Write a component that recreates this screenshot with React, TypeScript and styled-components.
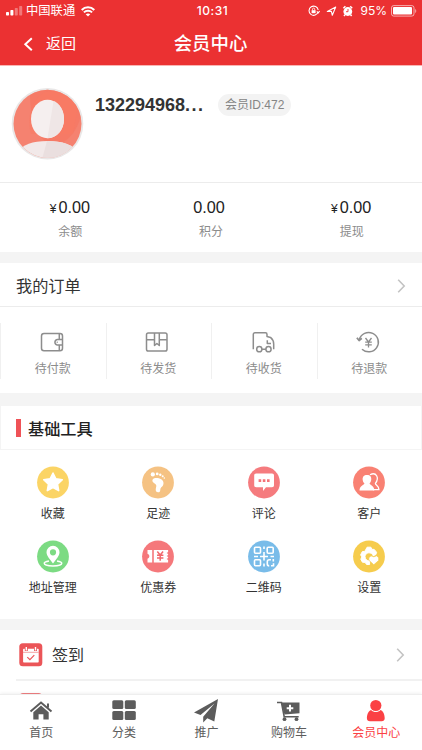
import React from "react";
import styled, { createGlobalStyle } from "styled-components";

const GlobalStyle = createGlobalStyle`
  * { box-sizing: border-box; }
  body {
    margin: 0;
    background: #fff;
    color: #333;
    font-family: "Liberation Sans", "Noto Sans CJK SC", sans-serif;
  }
  svg { display: block; flex: none; }
`;

const Screen = styled.div`
  width: 422px;
  height: 750px;
  display: flex;
  flex-direction: column;
  overflow: hidden;
  background: #fff;
`;

const Header = styled.header`
  flex: none;
  height: 66px;
  background: #eb3132;
  color: #fff;
  border-bottom: 1px solid #f9b5b3;
`;

const StatusBar = styled.div`
  height: 22px;
  padding: 0 5px 0 6px;
  display: grid;
  grid-template-columns: 1fr auto 1fr;
  align-items: center;
  font-size: 12px;
  line-height: 22px;
`;

const StatusGroup = styled.div<{ $end?: boolean }>`
  display: flex;
  align-items: center;
  justify-content: ${(p) => (p.$end ? "flex-end" : "flex-start")};
`;

const Carrier = styled.span`
  margin: 0 6px 0 3px;
  font-size: 12.3px;
`;

const Clock = styled.span`
  padding-left: 2px;
  font-family: Inter, sans-serif;
  font-weight: 500;
  font-size: 12px;
  letter-spacing: 0.5px;
`;

const Percent = styled.span`
  margin: 0 4px 0 6px;
  font-family: Inter, sans-serif;
  font-size: 12px;
`;

const NavBar = styled.div`
  height: 43px;
  padding: 0 24px 0 23px;
  display: grid;
  grid-template-columns: 1fr auto 1fr;
  align-items: center;
`;

const Back = styled.div`
  display: flex;
  align-items: center;
  gap: 13px;
  font-size: 15px;
  line-height: 20px;
`;

const Title = styled.h1`
  margin: 0;
  font-size: 18.4px;
  line-height: 24px;
  font-weight: 500;
`;

const Content = styled.main`
  flex: 1;
  min-height: 0;
  overflow: hidden;
`;

const Profile = styled.section`
  height: 117px;
  padding: 20px 11px 0;
  display: flex;
  align-items: flex-start;
  border-bottom: 1px solid #ececec;
`;

const Phone = styled.strong`
  margin: 7px 13px 0 11px;
  width: 110px;
  font-size: 18px;
  line-height: 24px;
  white-space: nowrap;
`;

const Ellipsis = styled.span`
  letter-spacing: 1.5px;
`;

const MemberId = styled.span`
  margin-top: 8px;
  height: 22px;
  padding: 0 7px;
  border-radius: 11px;
  background: #f3f3f3;
  color: #858585;
  font-size: 12px;
  line-height: 22px;
  white-space: nowrap;
`;

const Stats = styled.section`
  height: 69px;
  padding-top: 12px;
  display: grid;
  grid-template-columns: repeat(3, 1fr);
  text-align: center;
`;

const Amount = styled.div<{ $plain?: boolean }>`
  height: 25px;
  display: flex;
  justify-content: center;
  align-items: baseline;
  gap: 2px;
  padding-right: ${(p) => (p.$plain ? "4px" : "1px")};
  color: #222;
  font-size: 16.2px;
  line-height: 24px;
`;

const Yen = styled.span`
  font-size: 12px;
`;

const Caption = styled.div<{ $dark?: boolean }>`
  color: ${(p) => (p.$dark ? "#333" : "#8c8c8c")};
  font-size: 12px;
  line-height: 18px;
  text-align: center;
`;

const StatCaption = styled(Caption)`
  margin-top: 3px;
`;

const Gap = styled.div<{ $size: number }>`
  height: ${(p) => p.$size}px;
  background: #f4f4f4;
`;

const OrdersHead = styled.div`
  height: 44px;
  padding: 2px 16px 0;
  display: flex;
  align-items: center;
  justify-content: space-between;
  border-bottom: 1px solid #ececec;
  font-size: 16.2px;
  line-height: 24px;
`;

const Orders = styled.div`
  height: 86px;
  padding-top: 16px;
  display: grid;
  grid-template-columns: repeat(4, 1fr);
`;

const Order = styled.div`
  height: 56px;
  padding: 7px 1px 0 0;
  display: flex;
  flex-direction: column;
  align-items: center;
  gap: 5px;
  border-left: 1px solid #f0f0f0;

  svg { margin-right: 2px; }
`;

const ToolsHead = styled.div`
  height: 44px;
  padding: 0 15px;
  display: flex;
  align-items: center;
  gap: 7px;
  border: solid #f4f4f4;
  border-width: 0 1px 1px;
  color: #222;
  font-size: 16.2px;
  font-weight: 500;
  line-height: 24px;
`;

const ToolsTitle = styled.span`
  padding-top: 2px;
`;

const Marker = styled.i`
  width: 5px;
  height: 18px;
  background: #ef5257;
`;

const Tools = styled.div`
  height: 169px;
  padding-top: 16px;
  display: grid;
  grid-template-columns: repeat(4, 1fr);
  grid-auto-rows: 73.5px;
`;

const Tool = styled.div`
  display: flex;
  flex-direction: column;
  align-items: center;
  gap: 6px;
`;

const Row = styled.div`
  margin-left: 16px;
  height: 51px;
  padding: 0 17px 0 3px;
  display: flex;
  align-items: center;
  border-bottom: 2px solid #f1f1f1;
  font-size: 16px;
  line-height: 24px;
`;

const NextRow = styled(Row)`
  height: 49px;
`;

const RowLabel = styled.span`
  flex: 1;
  margin-left: 9px;
  padding-top: 2px;
`;

const TabBar = styled.nav`
  flex: none;
  height: 56px;
  display: grid;
  grid-template-columns: repeat(4, 82.6px) 1fr;
  background: #fff;
  border-top: 1px solid #eee;
  box-shadow: 0 -1px 3px rgba(0, 0, 0, 0.06);
  z-index: 1;
`;

const Tab = styled.div<{ $active?: boolean }>`
  padding-top: 4px;
  display: flex;
  flex-direction: column;
  align-items: center;
  gap: 1px;
  color: ${(p) => (p.$active ? "#fb4144" : "#5c5c5c")};
  font-size: 12px;
  line-height: 18px;
`;

const Signal = () => (
  <svg width="17" height="10" viewBox="0 0 17 10" fill="#fff">
    <rect x="0" y="6" width="3" height="3.5" rx=".7" />
    <rect x="4.4" y="4" width="3" height="5.5" rx=".7" />
    <rect x="8.8" y="2" width="3" height="7.5" rx=".7" opacity=".35" />
    <rect x="13.2" y="0" width="3" height="9.5" rx=".7" opacity=".35" />
  </svg>
);

const Wifi = () => (
  <svg width="14" height="11" viewBox="0 0 14 11" fill="none" stroke="#fff" strokeWidth="2">
    <path d="M.7 4C4.2.4 9.8.4 13.3 4M2.9 6.4c2.3-2.2 5.9-2.2 8.2 0" />
    <path d="M7 10.6 4.7 8.2c1.3-1.1 3.3-1.1 4.600 0z" fill="#fff" stroke="none" />
  </svg>
);

const StatusIcons = () => (
  <svg width="46" height="12" viewBox="0 0 46 12" fill="none" stroke="#fff" strokeWidth="1.1">
    <path d="M10.1 6.9A4.6 4.6 0 1 1 10.2 5M8.8 6.3l1.5 1.5L11.6 6" />
    <rect x="3.6" y="5.2" width="4" height="3" fill="#fff" stroke="none" />
    <path d="M4.5 5.4V4.2a1.1 1.1 0 0 1 2.2 0v1.2" strokeWidth=".8" />
    <path d="M19.3 6.4 27.7 2l-3.4 8.3-.9-3.9z" strokeLinejoin="round" />
    <circle cx="39.8" cy="6.5" r="4.4" fill="#fff" stroke="none" />
    <path d="m35.4 3.3 2-2M44.2 3.3l-2-2M37 9.700l-1 1.300M42.6 9.700l1 1.300" strokeWidth="1.5" />
    <path d="M40 4v2.700h-2" stroke="#eb3132" strokeWidth=".9" />
  </svg>
);

const Battery = () => (
  <svg width="26" height="12" viewBox="0 0 26 12">
    <rect x=".5" y=".6" width="22.5" height="10.5" rx="2.2" fill="none" stroke="#fff" opacity=".6" />
    <rect x="2" y="2.1" width="19" height="7.5" rx="1" fill="#fff" />
    <path d="M24.2 4v4c1.4-.5 1.4-3.5 0-4z" fill="#fff" opacity=".6" />
  </svg>
);

const BackArrow = () => (
  <svg width="10" height="16" viewBox="0 0 10 16" fill="none" stroke="#fff" strokeWidth="2">
    <path d="m8.8 2.2-6.5 6 6.5 6" />
  </svg>
);

const Chevron = () => (
  <svg width="9" height="16" viewBox="0 0 9 16" fill="none" stroke="#c3c3c3" strokeWidth="1.6">
    <path d="m1.2 1.8 6 6.2-6 6.2" />
  </svg>
);

const Avatar = () => (
  <svg width="73" height="74" viewBox="0 0 73 74">
    <defs>
      <clipPath id="face">
        <circle cx="36.5" cy="37.8" r="34" />
      </clipPath>
    </defs>
    <circle cx="36.5" cy="37.8" r="35.800" fill="#e9e7e7" />
    <g clipPath="url(#face)">
      <rect width="73" height="74" fill="#f58270" />
      <path d="M19 0h52v18c0 24-14 39-28 42-15-4-25-23-24-60z" fill="#f5755f" opacity=".55" />
      <path d="M35 6c16-3 27 4 32 14L62 48H20c-5-17 1-36 15-42z" fill="#fb7961" opacity=".45" />
      <path d="M7 65c5-6 14-10 29.500-10S61 59 67 65v12H7z" fill="#f2e9e9" />
      <ellipse cx="36.5" cy="33" rx="16.5" ry="19.3" fill="#f5efef" />
      <path d="M42.500 15c6 2.500 10.500 9 10.500 18 0 11-7.300 19.200-16.500 19.300z" fill="#efe6e6" />
      <path d="M36 55c15.500 0 25 4 31 10v12H30z" fill="#eadfdf" />
    </g>
  </svg>
);

const orderArt = {
  wallet: (
    <>
      <rect x="2.500" y="3.600" width="21" height="17.200" rx="2.500" />
      <path d="M20.300 3.800v5.700M20.300 15.200v5.300M23.500 9.600h-5.300a2.800 2.800 0 0 0 0 5.500h5.300M17.700 12.300h1" />
    </>
  ),
  box: (
    <>
      <rect x="2.500" y="3" width="20.500" height="18" rx="1.800" />
      <path d="M2.800 9.800h7.600M15.400 9.800h7.500M10.500 3v12.500l2.400-2 2.400 2V3" />
    </>
  ),
  truck: (
    <>
      <path d="M3.300 19.200V4.500c0-1.100.6-1.700 1.700-1.700h10.500c1 0 1.500.6 1.500 1.600v2.200l3.500.8c2 1.700 3.200 3.600 3.200 6.500v5.300M17.300 10.200v3.300h3.700M12 19.200h4" />
      <circle cx="9.300" cy="19.200" r="2.600" />
      <circle cx="18.500" cy="19.200" r="2.600" />
    </>
  ),
  refund: (
    <>
      <path d="M4.300 9.500A9.700 9.700 0 1 1 7 19.200" />
      <path d="m1.900 7.800 2.200 2.700 2.700-2.200" strokeWidth="1.800" />
      <path d="m10.500 8 3 4 3-4M13.500 12v5.600M10.200 12.200h6.600M10.200 14.800h6.600" strokeWidth="1.300" />
    </>
  ),
};

const OrderIcon = ({ kind }: { kind: keyof typeof orderArt }) => (
  <svg width="26" height="25" viewBox="0 0 26 25" fill="none" stroke="#8d8d8d" strokeWidth="1.500" strokeLinejoin="round">
    {orderArt[kind]}
  </svg>
);

const toolArt = {
  star: (
    <path d="m16 7 2.900 5.800 6.400.9-4.700 4.600 1.100 6.400-5.700-3-5.700 3 1.100-6.400-4.700-4.600 6.400-.9z" fill="#fff" stroke="#fff" strokeWidth="1.500" strokeLinejoin="round" />
  ),
  foot: (
    <g fill="#fff">
      <path d="M10.500 14c1-3.500 11.300-2 11 3.300-.2 4-3 3.400-3.200 6.400 0 2-1.300 3-3 2.400-2.300-.7-1.500-3.500-1-5.900.6-2.700-4.800-3.200-3.800-6.200z" />
      <circle cx="10.800" cy="8.400" r="2.100" />
      <circle cx="15.200" cy="7.900" r="1.400" />
      <circle cx="18.300" cy="8.700" r="1.200" />
      <circle cx="20.700" cy="10.200" r="1" />
      <circle cx="22.300" cy="12" r=".8" />
    </g>
  ),
  chat: (
    <>
      <path d="M8.200 7.500h15.800c1.300 0 2 .8 2 2v9.800c0 1.200-.7 2-2 2H18l-3 3.700v-3.700H8.200c-1.300 0-2-.8-2-2V9.500c0-1.200.7-2 2-2z" fill="#fff" />
      <path d="M10.600 13.300h2.600v2.600h-2.600zM14.800 13.300h2.600v2.600h-2.600zM19 13.300h2.600v2.600H19z" fill="#f47378" />
    </>
  ),
  people: (
    <>
      <path d="M17 8.800c6.300-3.500 9.600 3.200 5.400 8.500-.2 2 3.500 2.300 3.500 6.300H20" fill="none" stroke="#fff" strokeWidth="1.300" />
      <path d="M14 9c3.200 0 4.700 2 4.200 4.900-.2 1.600-.9 2.700-1.600 3.400 0 2 4.700 2.100 4.700 7.300H6.500c0-5 4.900-5.300 4.900-7.300-.9-.7-1.500-1.800-1.700-3.400C9.300 11 10.900 9 14 9z" fill="#fff" />
    </>
  ),
  pin: (
    <>
      <path d="M12 21c-3 .6-4.800 1.400-4.800 2.300C7.200 24.800 11 26 16 26s8.800-1.200 8.800-2.700c0-.9-1.800-1.700-4.800-2.300" fill="none" stroke="#fff" strokeWidth="1.400" />
      <path d="M16 23.500c-3-4.200-6.500-7.500-6.500-11.200a6.500 6.500 0 0 1 13 0c0 3.700-3.500 7-6.500 11.200zM16 9.200a3.100 3.100 0 1 0 0 6.200 3.100 3.100 0 0 0 0-6.200z" fill="#fff" fillRule="evenodd" />
    </>
  ),
  coupon: (
    <>
      <path d="M5.500 10h4.700v12.500H5.500v-3.700c2.500-1 2.500-4 0-5zM11.800 10h14.300v2l-1.500 1 1.500 1v1l-1.500 1 1.500 1v1l-1.500 1 1.500 1v2.500H11.800z" fill="#fff" />
      <path d="m15.300 11.500 2.900 3.500 2.900-3.500M18.200 15v5.700M15 15.300h6.400M15 18h6.400" fill="none" stroke="#f2696d" strokeWidth="1.500" />
    </>
  ),
  qr: (
    <g fill="none" stroke="#fff" strokeWidth="1.600">
      <rect x="6.500" y="7.200" width="6" height="6" rx="1" />
      <rect x="19.200" y="7.200" width="6" height="6" rx="1" />
      <rect x="6.500" y="19.700" width="6" height="6" rx="1" />
      <path d="M16 6.500v2.500M16 12v8.500M6 16.500h4M12 16.500h8M22.500 16.500h3.500M16 23.500v3M23 19.700h-1.800c-1.300 0-1.900.8-1.900 2v2.300c0 1.200.7 1.900 1.900 1.900M25.300 19v2.500M23 25.700h2.500v-2.500" />
    </g>
  ),
  gear: (
    <>
      <path d="M14.100 7.200h3.800l1 2.100 2.300.1 2.400 2.900-.8 2.400-2.800 1c-1.100-4.400-8-3.500-8 .9 0 2.600 2.100 4.500 4.600 4.300v3.600h-3l-1.500-2.100-2.700-.2-1.600-3 1.100-2.300-1.300-2 1.700-3.300 2.500-.2z" fill="#fff" stroke="#fff" strokeWidth="1" strokeLinejoin="round" />
      <path d="m15.800 17.700 2.200-1.900 2.900 1 2.700-1 2.100 1.900v2.800l-4.900 4.300-5-4.600z" fill="#fff" stroke="#f4cc4c" strokeWidth=".7" />
    </>
  ),
};

const ToolIcon = ({ kind, color }: { kind: keyof typeof toolArt; color: string }) => (
  <svg width="32" height="33" viewBox="0 0 32 33">
    <circle cx="16" cy="16.500" r="15.900" fill={color} />
    {toolArt[kind]}
  </svg>
);

const Calendar = () => (
  <svg width="24" height="24" viewBox="0 0 24 24">
    <rect x=".3" y=".3" width="23" height="23" rx="3.500" fill="#eb5558" />
    <rect x="4.100" y="5.800" width="15.600" height="13.800" rx=".8" fill="#fff" />
    <path d="M4 9.300h15.800" stroke="#f08a8c" strokeWidth=".8" />
    <path d="M7.300 4v4M16.500 4v4" stroke="#eb5558" strokeWidth="3" />
    <path d="M7.300 4v3.500M16.500 4v3.500" stroke="#fff" strokeWidth="1.400" />
    <path d="m8.300 14.100 2.600 2.500 4.400-4.500" fill="none" stroke="#eb5558" strokeWidth="1.200" />
  </svg>
);

const tabArt = {
  home: (
    <>
      <path d="M13 6.500 5.300 13.300v7.200h5.300v-5.300h4.800v5.300h5.300v-7.200z" />
      <path d="M2.500 12.500 13 3.600l10.500 8.900M20 4.500v4" fill="none" stroke="currentColor" strokeWidth="2" />
    </>
  ),
  grid: (
    <>
      <rect x="1.300" y="1.200" width="11" height="8.900" rx="1.500" />
      <rect x="13.800" y="1.200" width="11" height="8.900" rx="1.500" />
      <rect x="1.300" y="12" width="11" height="8.900" rx="1.500" />
      <rect x="13.800" y="12" width="11" height="8.900" rx="1.500" />
    </>
  ),
  plane: (
    <path d="M25 0 1 13.500l6.500 2.600L21.500 4.500 10.200 17.700v5.800l4.100-4.200 7 3.300z" />
  ),
  cart: (
    <>
      <path d="M5 3.500h18.500v10.800l-15 1.200zM13 5.800v2.400h-2.300v2H13v2.300h2v-2.300h2.300v-2H15V5.800z" fillRule="evenodd" />
      <path d="M1 3.500h4.500l2.700 14.200h14.500" fill="none" stroke="currentColor" strokeWidth="1.600" />
      <circle cx="8.500" cy="20.200" r="1.900" />
      <circle cx="20.500" cy="20.200" r="1.900" />
    </>
  ),
  user: (
    <>
      <circle cx="12.800" cy="6.500" r="5.600" />
      <path d="M8.100 10.900c2.400 2.700 7 2.700 9.400 0 3 1.200 4.200 5 4.200 8.400 0 2-1.200 2.900-3 2.900H6.900c-1.800 0-3-.9-3-2.900 0-3.400 1.200-7.200 4.200-8.400z" />
    </>
  ),
};

const TabIcon = ({ kind }: { kind: keyof typeof tabArt }) => (
  <svg width="26" height="24" viewBox="0 0 26 24" fill="currentColor">
    {tabArt[kind]}
  </svg>
);

const stats = [
  { label: "余额", money: true },
  { label: "积分", money: false },
  { label: "提现", money: true },
];

const orders: { label: string; icon: keyof typeof orderArt }[] = [
  { label: "待付款", icon: "wallet" },
  { label: "待发货", icon: "box" },
  { label: "待收货", icon: "truck" },
  { label: "待退款", icon: "refund" },
];

const tools: { label: string; icon: keyof typeof toolArt; color: string }[] = [
  { label: "收藏", icon: "star", color: "#fbd465" },
  { label: "足迹", icon: "foot", color: "#f5c283" },
  { label: "评论", icon: "chat", color: "#f57b7e" },
  { label: "客户", icon: "people", color: "#f98173" },
  { label: "地址管理", icon: "pin", color: "#7cdb83" },
  { label: "优惠券", icon: "coupon", color: "#f5787b" },
  { label: "二维码", icon: "qr", color: "#79bce9" },
  { label: "设置", icon: "gear", color: "#f6cc4d" },
];

const tabs: { label: string; icon: keyof typeof tabArt }[] = [
  { label: "首页", icon: "home" },
  { label: "分类", icon: "grid" },
  { label: "推广", icon: "plane" },
  { label: "购物车", icon: "cart" },
  { label: "会员中心", icon: "user" },
];

export default function App() {
  return (
    <Screen>
      <GlobalStyle />
      <Header>
        <StatusBar>
          <StatusGroup>
            <Signal />
            <Carrier>中国联通</Carrier>
            <Wifi />
          </StatusGroup>
          <Clock>10:31</Clock>
          <StatusGroup $end>
            <StatusIcons />
            <Percent>95%</Percent>
            <Battery />
          </StatusGroup>
        </StatusBar>
        <NavBar>
          <Back>
            <BackArrow />
            返回
          </Back>
          <Title>会员中心</Title>
        </NavBar>
      </Header>

      <Content>
        <Profile>
          <Avatar />
          <Phone>
            132294968<Ellipsis>...</Ellipsis>
          </Phone>
          <MemberId>会员ID:472</MemberId>
        </Profile>
        <Stats>
          {stats.map((s) => (
            <div key={s.label}>
              <Amount $plain={!s.money}>
                {s.money && <Yen>¥</Yen>}
                0.00
              </Amount>
              <StatCaption>{s.label}</StatCaption>
            </div>
          ))}
        </Stats>
        <Gap $size={11} />
        <OrdersHead>
          我的订单
          <Chevron />
        </OrdersHead>
        <Orders>
          {orders.map((o) => (
            <Order key={o.label}>
              <OrderIcon kind={o.icon} />
              <Caption>{o.label}</Caption>
            </Order>
          ))}
        </Orders>
        <Gap $size={13} />
        <ToolsHead>
          <Marker />
          <ToolsTitle>基础工具</ToolsTitle>
        </ToolsHead>
        <Tools>
          {tools.map((t) => (
            <Tool key={t.label}>
              <ToolIcon kind={t.icon} color={t.color} />
              <Caption $dark>{t.label}</Caption>
            </Tool>
          ))}
        </Tools>
        <Gap $size={11} />
        <Row>
          <Calendar />
          <RowLabel>签到</RowLabel>
          <Chevron />
        </Row>
        <NextRow>
          <Calendar />
        </NextRow>
      </Content>

      <TabBar>
        {tabs.map((t) => (
          <Tab key={t.label} $active={t.icon === "user"}>
            <TabIcon kind={t.icon} />
            {t.label}
          </Tab>
        ))}
      </TabBar>
    </Screen>
  );
}
